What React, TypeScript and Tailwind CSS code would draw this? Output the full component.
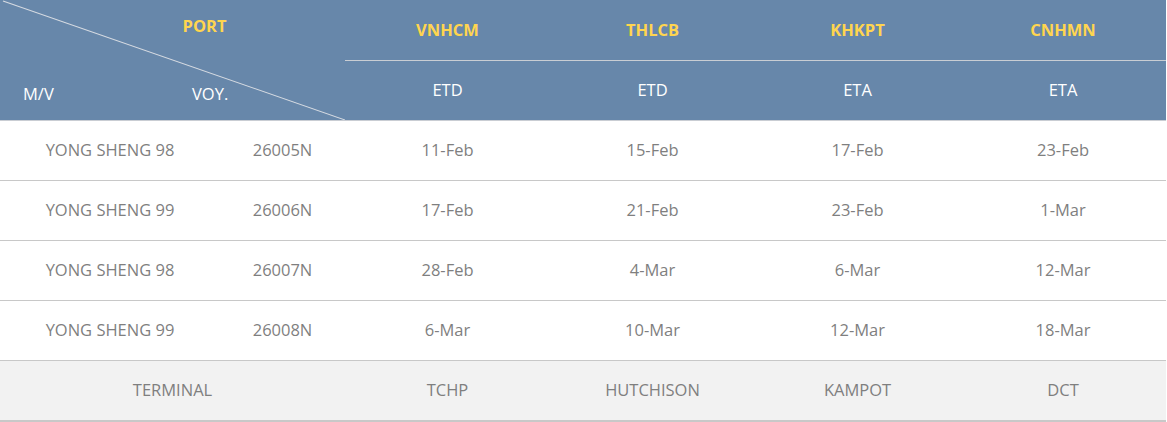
import React from 'react';

const ports = [
  { code: 'VNHCM', kind: 'ETD' },
  { code: 'THLCB', kind: 'ETD' },
  { code: 'KHKPT', kind: 'ETA' },
  { code: 'CNHMN', kind: 'ETA' },
];

const schedule = [
  { vessel: 'YONG SHENG 98', voy: '26005N', dates: ['11-Feb', '15-Feb', '17-Feb', '23-Feb'] },
  { vessel: 'YONG SHENG 99', voy: '26006N', dates: ['17-Feb', '21-Feb', '23-Feb', '1-Mar'] },
  { vessel: 'YONG SHENG 98', voy: '26007N', dates: ['28-Feb', '4-Mar', '6-Mar', '12-Mar'] },
  { vessel: 'YONG SHENG 99', voy: '26008N', dates: ['6-Mar', '10-Mar', '12-Mar', '18-Mar'] },
];

const terminals = ['TCHP', 'HUTCHISON', 'KAMPOT', 'DCT'];

export default function App() {
  return (
    <div className="w-[1167px] bg-white" style={{ fontFamily: '"Open Sans", "Noto Sans", sans-serif' }}>
      <table className="w-[1166px] table-fixed border-collapse text-[16.5px]">
        <colgroup>
          <col className="w-[220px]" />
          <col className="w-[125px]" />
          <col className="w-[205px]" />
          <col className="w-[205px]" />
          <col className="w-[205px]" />
          <col className="w-[206px]" />
        </colgroup>
        <thead className="bg-[#6787aa] text-white">
          <tr className="h-[60px]">
            <th colSpan={2} rowSpan={2} className="relative p-0 font-normal border-b border-[#c9cdd3]">
              <svg className="absolute inset-0 h-full w-full" viewBox="0 0 345 120" preserveAspectRatio="none">
                <line x1="3" y1="1" x2="345" y2="120" stroke="#d6dbe2" strokeWidth="1" />
              </svg>
              <div className="relative flex h-[120px] flex-col">
                <div className="pt-[14px] pl-[64px] text-center font-bold text-[#ffd54f]">PORT</div>
                <div className="mt-auto flex pb-[13px] text-left">
                  <span className="w-[192px] pl-[23px]">M/V</span>
                  <span>VOY.</span>
                </div>
              </div>
            </th>
            {ports.map((p) => (
              <th key={p.code} className="p-0 text-center font-bold text-[#ffd54f] border-b border-[#c9cdd3]">
                {p.code}
              </th>
            ))}
          </tr>
          <tr className="h-[60px]">
            {ports.map((p) => (
              <th key={p.code} className="p-0 text-center font-normal border-b border-[#c9cdd3]">
                {p.kind}
              </th>
            ))}
          </tr>
        </thead>
        <tbody className="text-[#7f7f7f]">
          {schedule.map((row) => (
            <tr key={row.voy} className="h-[60px] border-b border-[#c8c8c8]">
              <td className="p-0 text-center">{row.vessel}</td>
              <td className="p-0 text-center">{row.voy}</td>
              {row.dates.map((d, i) => (
                <td key={i} className="p-0 text-center">{d}</td>
              ))}
            </tr>
          ))}
          <tr className="h-[60px] bg-[#f2f2f2] border-b-2 border-[#c8c8c8]">
            <td colSpan={2} className="p-0 text-center">TERMINAL</td>
            {terminals.map((t) => (
              <td key={t} className="p-0 text-center">{t}</td>
            ))}
          </tr>
        </tbody>
      </table>
    </div>
  );
}
